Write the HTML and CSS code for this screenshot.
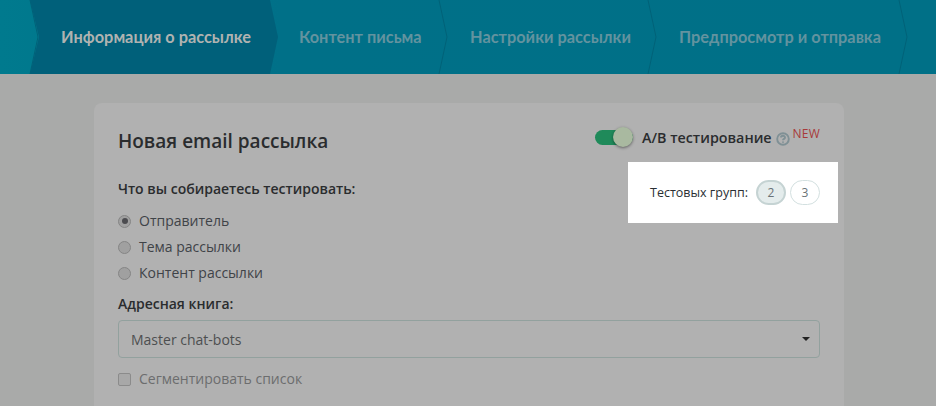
FILE: index.html
```html
<!DOCTYPE html>
<html lang="ru">
<head>
<meta charset="utf-8">
<title>Новая email рассылка</title>
<link rel="stylesheet" href="styles.css">
</head>
<body>
<header class="steps">
  <div class="step step-lead"><svg class="chev" viewBox="0 0 10 74"><path d="M1 0 L9 37 L1 74"/></svg></div>
  <div class="step step-active"><svg class="active-shape" viewBox="0 0 249 74"><path d="M0 0 H240 L248 37 L240 74 H0 L9 37 Z"/></svg><span class="step-label">Информация о рассылке</span></div>
  <div class="step step-2"><span class="step-label">Контент письма</span><svg class="chev" viewBox="0 0 10 74"><path d="M1 0 L9 37 L1 74"/></svg></div>
  <div class="step step-3"><span class="step-label">Настройки рассылки</span><svg class="chev" viewBox="0 0 10 74"><path d="M1 0 L9 37 L1 74"/></svg></div>
  <div class="step step-4"><span class="step-label">Предпросмотр и отправка</span><svg class="chev" viewBox="0 0 10 74"><path d="M1 0 L9 37 L1 74"/></svg></div>
</header>
<main class="page">
  <section class="card">
    <div class="card-head">
      <h1 class="title">Новая email рассылка</h1>
      <div class="ab">
        <span class="toggle"><span class="knob"></span></span>
        <span class="ab-label">A/B тестирование</span>
        <svg class="help" viewBox="0 0 14 14"><circle cx="7" cy="7" r="5.8"/><path d="M5 5.6 C5 3.2 9 3.2 9 5.5 C9 6.9 7 6.8 7 8.3"/><path d="M7 9.4 V10.8"/></svg>
        <span class="new">NEW</span>
      </div>
    </div>
    <div class="test-row">
      <div class="test-col">
        <div class="label label-test">Что вы собираетесь тестировать:</div>
        <label class="radio"><span class="dot dot-on"></span>Отправитель</label>
        <label class="radio"><span class="dot"></span>Тема рассылки</label>
        <label class="radio"><span class="dot"></span>Контент рассылки</label>
      </div>
      <div class="groups">
        <span class="groups-label">Тестовых групп:</span>
        <span class="pill pill-on">2</span>
        <span class="pill">3</span>
      </div>
    </div>
    <div class="label label-book">Адресная книга:</div>
    <div class="select"><span>Master chat-bots</span><span class="caret"></span></div>
    <label class="check"><span class="box"></span>Сегментировать список</label>
  </section>
</main>
</body>
</html>
```
FILE: styles.css
```css
* { box-sizing: border-box; }
html, body { margin: 0; height: 100%; }
body {
  background: #a9aaa9;
  font-family: "Open Sans", "Noto Sans", sans-serif;
  color: #2a2c2e;
  overflow: hidden;
}
.steps {
  display: flex;
  height: 74px;
  background: linear-gradient(90deg, #007a8e 0%, #007088 30%, #007087 100%);
}
.step {
  position: relative;
  display: flex;
  align-items: center;
  height: 74px;
  flex: none;
}
.step-lead { width: 30px; }
.step-active { width: 240px; padding: 0 0 2px 31px; }
.step-2 { width: 169px; padding: 0 0 2px 29px; }
.step-3 { width: 209px; padding: 0 0 2px 31px; }
.step-4 { width: 251px; padding: 0 0 2px 31px; }
.step-label {
  position: relative;
  font-family: "Lato", "Noto Sans", sans-serif;
  font-weight: 700;
  font-size: 16.35px;
  color: #63939f;
  white-space: nowrap;
}
.step-active .step-label { color: #b0b3b1; }
.active-shape {
  position: absolute;
  left: 0;
  top: 0;
  width: 249px;
  height: 74px;
}
.active-shape path { fill: #00607a; }
.chev {
  position: absolute;
  right: -9px;
  top: 0;
  width: 10px;
  height: 74px;
}
.chev path { fill: none; stroke: #006278; stroke-width: 1; }
.page { padding: 29px 92px 0 94px; }
.card {
  background: #b1b1b1;
  border-radius: 8px 8px 0 0;
  padding: 24px 24px 0;
  height: 320px;
}
.card-head {
  display: flex;
  justify-content: space-between;
  align-items: flex-start;
}
.title {
  margin: 1px 0 0;
  font-size: 19px;
  line-height: 26px;
  font-weight: 600;
  color: #2a2c2e;
}
.ab { display: flex; align-items: center; height: 22px; position: relative; }
.toggle {
  position: relative;
  display: block;
  width: 38px;
  height: 15px;
  border-radius: 8px;
  background: #1f8a5a;
  margin: -1px 9px 0 0;
}
.knob {
  position: absolute;
  right: 0;
  top: -3px;
  width: 20px;
  height: 20px;
  border-radius: 50%;
  background: #a9b9a0;
  box-shadow: 0 1px 3px rgba(0,0,0,.45);
}
.ab-label { font-size: 14.3px; font-weight: 600; color: #2a2c2e; white-space: nowrap; margin-top: -1px; }
.help { width: 14px; height: 14px; margin: 2px 0 0 4px; }
.help circle, .help path { fill: none; stroke: #7f9095; stroke-width: 1.9; }
.new { font-size: 12px; font-weight: 400; color: #a83a3a; margin: -9px 0 0 3px; line-height: 14px; letter-spacing: .2px; }
.test-row { display: flex; justify-content: space-between; align-items: flex-start; }
.test-col { display: flex; flex-direction: column; }
.label { font-size: 14px; line-height: 20px; font-weight: 600; color: #2a2c2e; }
.label-test { margin-top: 25px; margin-bottom: 9px; }
.radio, .check { display: flex; align-items: center; font-size: 14px; line-height: 26px; color: #3f4348; }
.dot {
  width: 13px;
  height: 13px;
  border-radius: 50%;
  background: #a0a0a0;
  border: 1px solid #858585;
  margin-right: 8px;
  position: relative;
  display: flex;
  align-items: center;
  justify-content: center;
}
.dot-on::after {
  content: "";
  width: 6px;
  height: 6px;
  border-radius: 50%;
  background: #4b4b4f;
}
.groups {
  display: flex;
  align-items: center;
  width: 210px;
  height: 61px;
  margin: 8px -18px 0 0;
  padding-left: 22px;
  background: #fff;
}
.groups-label { font-size: 12.5px; color: #2a2f33; margin-right: 8px; white-space: nowrap; }
.pill {
  display: flex;
  align-items: center;
  justify-content: center;
  width: 30px;
  height: 25px;
  border-radius: 12.5px;
  border: 1px solid #d3e0e0;
  background: #fff;
  color: #6a7276;
  font-size: 12px;
  margin-right: 4px;
}
.pill-on {
  background: #e4ecec;
  border: 2px solid #c5d3d3;
}
.label-book { margin-top: 8px; margin-bottom: 6px; }
.select {
  display: flex;
  justify-content: space-between;
  align-items: center;
  height: 38px;
  border: 1px solid #92a19e;
  border-radius: 4px;
  padding: 0 9px 0 12px;
  font-size: 14px;
  color: #4d4f50;
}
.caret {
  width: 0;
  height: 0;
  border-left: 4px solid transparent;
  border-right: 4px solid transparent;
  border-top: 4px solid #222;
}
.check { margin-top: 8px; color: #6c6d6e; }
.box {
  width: 13px;
  height: 13px;
  border-radius: 2px;
  border: 1px solid #8b8b8b;
  background: #a8a8a8;
  margin-right: 8px;
}
```
